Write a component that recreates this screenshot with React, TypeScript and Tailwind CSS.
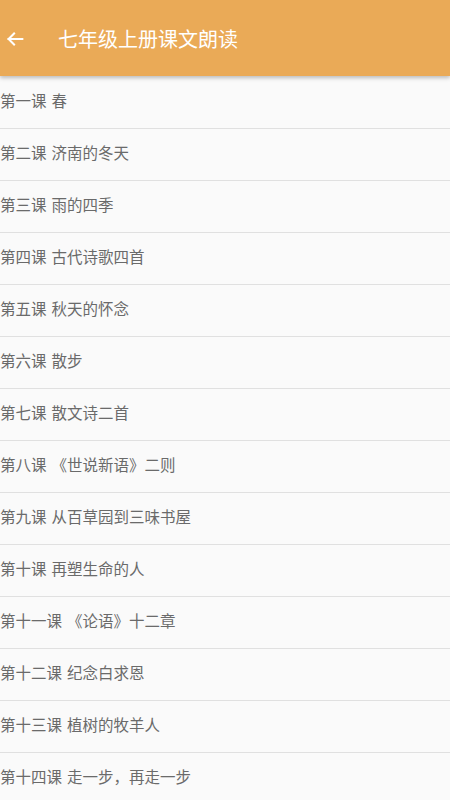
import React from "react";

const lessons = [
  "第一课 春",
  "第二课 济南的冬天",
  "第三课 雨的四季",
  "第四课 古代诗歌四首",
  "第五课 秋天的怀念",
  "第六课 散步",
  "第七课 散文诗二首",
  "第八课 《世说新语》二则",
  "第九课 从百草园到三味书屋",
  "第十课 再塑生命的人",
  "第十一课 《论语》十二章",
  "第十二课 纪念白求恩",
  "第十三课 植树的牧羊人",
  "第十四课 走一步，再走一步",
];

export default function App() {
  return (
    <div
      className="w-[450px] h-[800px] overflow-hidden bg-[#fafafa]"
      style={{ fontFamily: '"Noto Sans CJK SC", "Noto Sans", sans-serif' }}
    >
      <header className="relative z-10 flex h-[76px] items-center bg-[#eaaa57] pt-[2px] shadow-[0_2px_4px_rgba(0,0,0,0.25)]">
        <svg viewBox="0 0 24 24" className="ml-[4px] h-[22px] w-[22px]" fill="none" stroke="white" strokeWidth="2.2" strokeLinecap="square">
          <path d="M20 12H5" />
          <path d="M11 6l-6 6 6 6" />
        </svg>
        <h1 className="ml-[32px] text-[20px] text-white">七年级上册课文朗读</h1>
      </header>
      <ul>
        {lessons.map((t) => {
          const [num, title] = t.split(" ");
          return (
            <li
              key={t}
              className="flex h-[52px] items-center border-b border-[#e0e0e0] pb-[3px] text-[15.5px] text-[#6a6a6a] first:h-[53px]"
            >
              <span>{num}</span>
              <span className="ml-[5px]">{title}</span>
            </li>
          );
        })}
      </ul>
    </div>
  );
}
